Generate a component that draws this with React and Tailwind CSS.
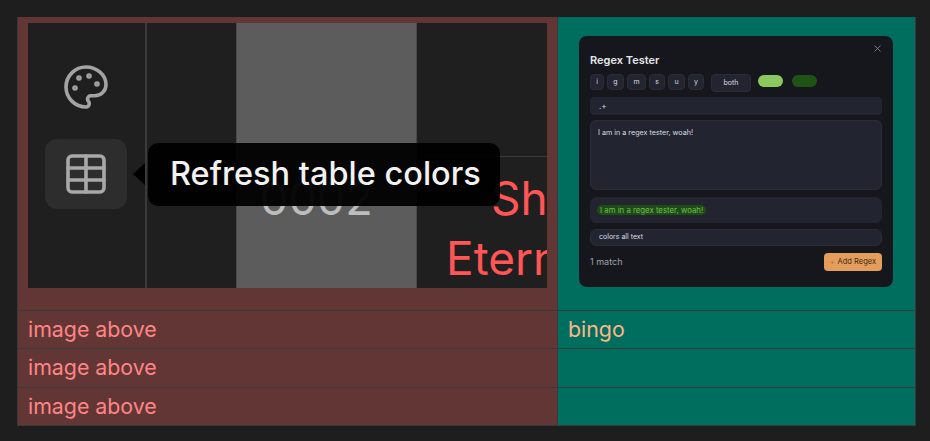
import React from "react";
import { Table, X } from "lucide-react";

const FLAGS = [
  { label: "i", width: "w-[14px]" },
  { label: "g", width: "w-[17px]" },
  { label: "m", width: "w-[19px]" },
  { label: "s", width: "w-[16px]" },
  { label: "u", width: "w-[17px]" },
  { label: "y", width: "w-[16px]" },
];

function PaletteIcon() {
  return (
    <svg width="48" height="48" viewBox="0 0 24 24" fill="none" stroke="#a3a3a3" strokeWidth="1.8" strokeLinecap="round" strokeLinejoin="round">
      <circle cx="13.5" cy="6.5" r=".5" fill="#a3a3a3" />
      <circle cx="17.5" cy="10.5" r=".5" fill="#a3a3a3" />
      <circle cx="8.5" cy="7.5" r=".5" fill="#a3a3a3" />
      <circle cx="6.5" cy="12.5" r=".5" fill="#a3a3a3" />
      <path d="M12 2C6.5 2 2 6.5 2 12s4.5 10 10 10c.926 0 1.648-.746 1.648-1.688 0-.437-.18-.835-.437-1.125-.29-.289-.438-.652-.438-1.125a1.64 1.64 0 0 1 1.668-1.668h1.996c3.051 0 5.555-2.503 5.555-5.554C21.965 6.012 17.461 2 12 2z" />
    </svg>
  );
}

function ToolbarScreenshot() {
  return (
    <div className="relative flex h-[265px] w-[519px] overflow-hidden bg-[#1f1f1f]">
      {/* sidebar */}
      <div className="flex w-[119px] shrink-0 flex-col items-start border-r-2 border-[#3a3a3a] pl-[17px] pt-[40px]">
        <div className="flex h-[48px] w-[82px] items-center justify-center">
          <PaletteIcon />
        </div>
        <div className="mt-[28px] flex h-[70px] w-[82px] items-center justify-center rounded-xl bg-[#2d2d2d]">
          <Table size={48} strokeWidth={1.8} className="text-[#a8a8a8]" />
        </div>
      </div>

      <div className="w-[89px] shrink-0" />

      {/* selected column */}
      <div className="w-[181px] shrink-0 border-l border-r border-[#4a4a4a] bg-[#5c5c5c] pl-[23px] pt-[156px] text-[45px] leading-[40px] text-[#bdbdbd]">
        0002
      </div>

      {/* name column */}
      <div className="min-w-0 flex-1">
        <div className="h-[134px] border-b border-[#3a3a3a]" />
        <div className="whitespace-nowrap pl-[29px] pt-[11px] text-[46px] leading-[60px] text-[#ff5555]">
          <div className="pl-[45px]">Sh</div>
          <div>Eternal</div>
        </div>
      </div>

      {/* tooltip */}
      <div className="absolute left-[120px] top-[120px] flex h-[63px] w-[352px] items-center rounded-[10px] bg-black/95 pl-[22px] text-[32.5px] font-medium whitespace-nowrap text-[#f2f2f2]">
        <div className="absolute left-[-15px] top-[20px] h-0 w-0 border-y-[11.5px] border-r-[12px] border-y-transparent border-r-black" />
        Refresh table colors
      </div>
    </div>
  );
}

function RegexTester() {
  return (
    <div className="relative flex h-[251px] w-[314px] flex-col rounded-lg bg-[#16171d] px-[11px] pt-[17px] text-[#dcdee4]">
      <X size={11} strokeWidth={1.5} className="absolute right-[10px] top-[7px] text-[#a1a1aa]" />
      <h2 className="text-[11px] leading-[14px] font-semibold text-[#e5e7eb]">Regex Tester</h2>

      <div className="mt-[7px] flex items-start">
        <div className="flex gap-[3px]">
          {FLAGS.map((flag) => (
            <div
              key={flag.label}
              className={`flex h-[16px] items-center justify-center rounded border border-[#2a2c38] bg-[#22242f] text-[7px] ${flag.width}`}
            >
              {flag.label}
            </div>
          ))}
        </div>
        <div className="ml-[7px] flex h-[18px] w-[40px] items-center justify-center rounded border border-[#2a2c38] bg-[#22242f] text-[7px]">
          both
        </div>
        <div className="ml-[7px] mt-px h-[12px] w-[25px] rounded-full bg-[#8bc95f]" />
        <div className="ml-[9px] mt-px h-[12px] w-[25px] rounded-full bg-[#1f5314]" />
      </div>

      <div className="mt-[5px] flex h-[18px] items-center rounded border border-[#22242f] bg-[#22242f] pl-2 text-[8px]">.+</div>

      <div className="mt-[5px] h-[70px] rounded-md border border-[#2a2c38] bg-[#22242f] px-[7px] pt-[7px] text-[7.2px] leading-[10px]">
        I am in a regex tester, woah!
      </div>

      <div className="mt-[7px] flex h-[26px] items-center rounded-md border border-[#22242f] bg-[#22242f] pl-[6px] text-[7.8px] text-[#6cc04a]">
        <span className="rounded-full bg-[#1f4a17] px-[3px] leading-[10px]">I am in a regex tester, woah!</span>
      </div>

      <div className="mt-[6px] flex h-[17px] items-center rounded-md border border-[#2a2c38] bg-[#22242f] pl-2 text-[7px]">
        colors all text
      </div>

      <div className="mt-[7px] flex items-center justify-between">
        <span className="text-[9px] text-[#a1a1aa]">1 match</span>
        <div className="flex h-[18px] w-[58px] items-center justify-center gap-[3px] rounded bg-[#e59d5c] text-[7.5px] text-[#3a2a1a]">
          <span className="text-[7px] text-[#a8703d]">+</span>
          Add Regex
        </div>
      </div>
    </div>
  );
}

export default function App() {
  const rows = [
    ["image above", "bingo", "h-[38px] border-b"],
    ["image above", "", "h-[39px] border-b"],
    ["image above", "", "h-[37px]"],
  ];

  return (
    <div className="h-[441px] w-[930px] bg-[#1e1e1e] pl-[17px] pt-[17px] font-['Inter',sans-serif]">
      <div className="grid w-[899px] grid-cols-[540px_358px] border-r border-b border-[#3a3a3a]">
        <div className="h-[294px] border-b border-l border-[#3a3a3a] bg-[#633636] px-[10px] pt-[6px]">
          <ToolbarScreenshot />
        </div>
        <div className="flex h-[294px] border-b border-l border-[#3a3a3a] bg-[#006e5f] pl-[21px] pt-[19px]">
          <RegexTester />
        </div>
        {rows.map(([left, right, rowClass], i) => (
          <React.Fragment key={i}>
            <div className={`flex items-center border-l border-[#3a3a3a] bg-[#633636] pl-[10px] text-[21.33px] text-[#ff8585] ${rowClass}`}>
              {left}
            </div>
            <div className={`flex items-center border-l border-[#3a3a3a] bg-[#006e5f] pl-[10px] text-[21.33px] text-[#ffb585] ${rowClass}`}>
              {right}
            </div>
          </React.Fragment>
        ))}
      </div>
    </div>
  );
}
